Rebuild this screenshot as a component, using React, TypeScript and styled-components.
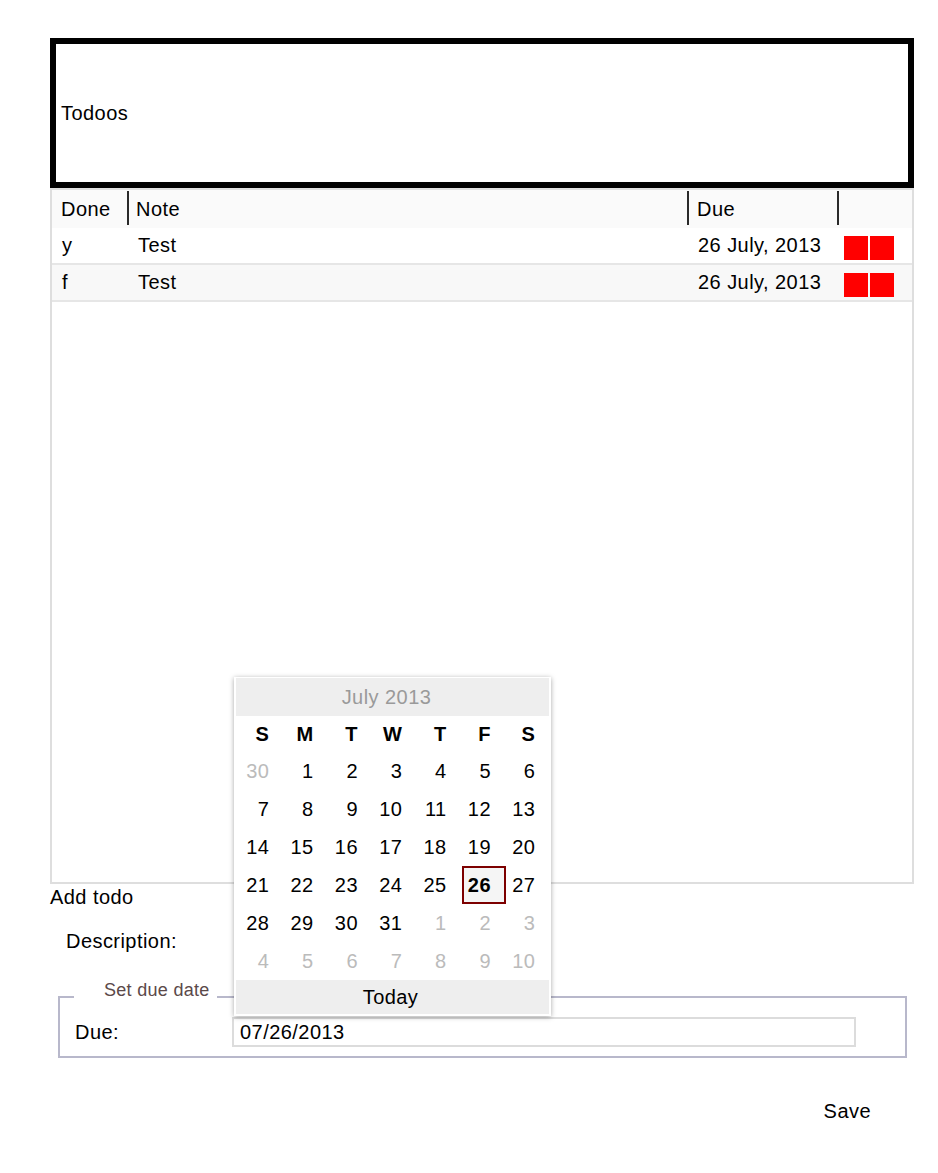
import React from "react";
import styled, { createGlobalStyle } from "styled-components";

const GlobalStyle = createGlobalStyle`
  html, body { margin: 0; padding: 0; background: #fff; }
  body { font-family: "Liberation Sans", Arial, Helvetica, sans-serif; color: #000; }
  * { box-sizing: border-box; }
`;

const Root = styled.div`
  position: relative;
  width: 938px;
  min-height: 1173px;
  padding: 38px 0 40px 50px;
  font-size: 20px;
  line-height: 24px;
  letter-spacing: 0.45px;
`;

const Header = styled.div`
  width: 864px;
  height: 150px;
  border: 6px solid #000;
  display: flex;
  align-items: center;
  padding: 0 5px;
`;

const TableBox = styled.div`
  width: 864px;
  height: 696px;
  border: 2px solid #dedede;
  display: flex;
  flex-direction: column;
`;

const cols = "75px 560px 150px 75px";

const HeadRow = styled.div`
  display: grid;
  grid-template-columns: ${cols};
  height: 38px;
  background: #fafafa;
  align-items: start;
  padding-top: 1px;
`;

const HeadCell = styled.div<{ $divider?: boolean; $pad: number }>`
  height: 34px;
  display: flex;
  align-items: center;
  padding-left: ${(p) => p.$pad}px;
  padding-top: 2px;
  border-left: ${(p) => (p.$divider ? "2px solid #2a2a2a" : "none")};
`;

const Row = styled.div<{ $alt?: boolean }>`
  display: grid;
  grid-template-columns: ${cols};
  height: 37px;
  background: ${(p) => (p.$alt ? "#f8f8f8" : "#ffffff")};
  border-bottom: 2px solid #e6e6e6;
`;

const Cell = styled.div<{ $pad: number }>`
  display: flex;
  align-items: center;
  padding-left: ${(p) => p.$pad}px;
  padding-bottom: 2px;
`;

const ActionCell = styled.div`
  display: flex;
  align-items: center;
  gap: 2px;
  padding: 4px 0 0 7px;
`;

const RedBox = styled.div`
  width: 24px;
  height: 24px;
  background: #ff0000;
`;

const SectionTitle = styled.div`
  margin-top: 1px;
`;

const DescLabel = styled.div`
  margin: 20px 0 0 16px;
`;

const Fieldset = styled.fieldset`
  margin: 26px 0 0 8px;
  width: 849px;
  border: 2px solid #b8b8cb;
  padding: 2px 0 9px 15px;
  display: flex;
  align-items: center;
`;

const Legend = styled.legend`
  margin-left: -1px;
  padding: 0 7px 14px 30px;
  font-size: 18px;
  line-height: 22px;
  letter-spacing: 0.3px;
  color: #5b4949;
`;

const DueLabel = styled.label`
  width: 157px;
`;

const DateInput = styled.div`
  width: 624px;
  height: 30px;
  border: 2px solid #dcdcdc;
  padding-left: 6px;
  display: flex;
  align-items: center;
`;

const SaveRow = styled.div`
  width: 864px;
  display: flex;
  justify-content: flex-end;
  padding-right: 43px;
  margin-top: 41px;
`;

const SaveButton = styled.button`
  font: inherit;
  letter-spacing: inherit;
  background: none;
  border: none;
  padding: 0;
  color: #000;
`;

/* Calendar popup (overlay) */
const Popup = styled.div`
  position: absolute;
  left: 234px;
  top: 677px;
  width: 317px;
  padding: 1px 2px 2px 2px;
  background: #fff;
  box-shadow: 0 1px 5px rgba(0, 0, 0, 0.35);
`;

const MonthBar = styled.div`
  height: 38px;
  background: #eeeeee;
  color: #9a9a9a;
  display: flex;
  align-items: center;
  justify-content: center;
  padding-right: 12px;
`;

const DayGrid = styled.div`
  margin-left: 4px;
  display: grid;
  grid-template-columns: repeat(7, 44.33px);
`;

const Weekday = styled.div`
  height: 36px;
  line-height: 36px;
  text-align: right;
  padding-right: 15px;
  font-weight: bold;
`;

const Day = styled.div<{ $out?: boolean; $sel?: boolean }>`
  height: 38px;
  line-height: ${(p) => (p.$sel ? "34px" : "38px")};
  text-align: right;
  padding-right: ${(p) => (p.$sel ? "13px" : "15px")};
  color: ${(p) => (p.$out ? "#bbbbbb" : "#000")};
  font-weight: ${(p) => (p.$sel ? "bold" : "normal")};
  background: ${(p) => (p.$sel ? "#f5f5f5" : "transparent")};
  border: ${(p) => (p.$sel ? "2px solid #7d0000" : "none")};
`;

const TodayBar = styled.div`
  height: 34px;
  background: #eeeeee;
  display: flex;
  align-items: center;
  justify-content: center;
  padding-right: 4px;
`;

type D = { n: number; out?: boolean; sel?: boolean };

const days: D[] = [
  { n: 30, out: true },
  ...Array.from({ length: 31 }, (_, i) => ({ n: i + 1, sel: i + 1 === 26 })),
  ...Array.from({ length: 10 }, (_, i) => ({ n: i + 1, out: true })),
];

const todos = [
  { done: "y", note: "Test", due: "26 July, 2013" },
  { done: "f", note: "Test", due: "26 July, 2013" },
];

export default function App() {
  return (
    <>
      <GlobalStyle />
      <Root>
        <Header>Todoos</Header>
        <TableBox>
          <HeadRow>
            <HeadCell $pad={9}>Done</HeadCell>
            <HeadCell $divider $pad={7}>Note</HeadCell>
            <HeadCell $divider $pad={8}>Due</HeadCell>
            <HeadCell $divider $pad={0} />
          </HeadRow>
          {todos.map((t, i) => (
            <Row key={i} $alt={i % 2 === 1}>
              <Cell $pad={10}>{t.done}</Cell>
              <Cell $pad={11}>{t.note}</Cell>
              <Cell $pad={11}>{t.due}</Cell>
              <ActionCell>
                <RedBox />
                <RedBox />
              </ActionCell>
            </Row>
          ))}
        </TableBox>
        <SectionTitle>Add todo</SectionTitle>
        <DescLabel>Description:</DescLabel>
        <Fieldset>
          <Legend>Set due date</Legend>
          <DueLabel>Due:</DueLabel>
          <DateInput>07/26/2013</DateInput>
        </Fieldset>
        <SaveRow>
          <SaveButton>Save</SaveButton>
        </SaveRow>

        <Popup>
          <MonthBar>July 2013</MonthBar>
          <DayGrid>
            {["S", "M", "T", "W", "T", "F", "S"].map((w, i) => (
              <Weekday key={i}>{w}</Weekday>
            ))}
            {days.map((d, i) => (
              <Day key={i} $out={d.out} $sel={d.sel}>
                {d.n}
              </Day>
            ))}
          </DayGrid>
          <TodayBar>Today</TodayBar>
        </Popup>
      </Root>
    </>
  );
}
